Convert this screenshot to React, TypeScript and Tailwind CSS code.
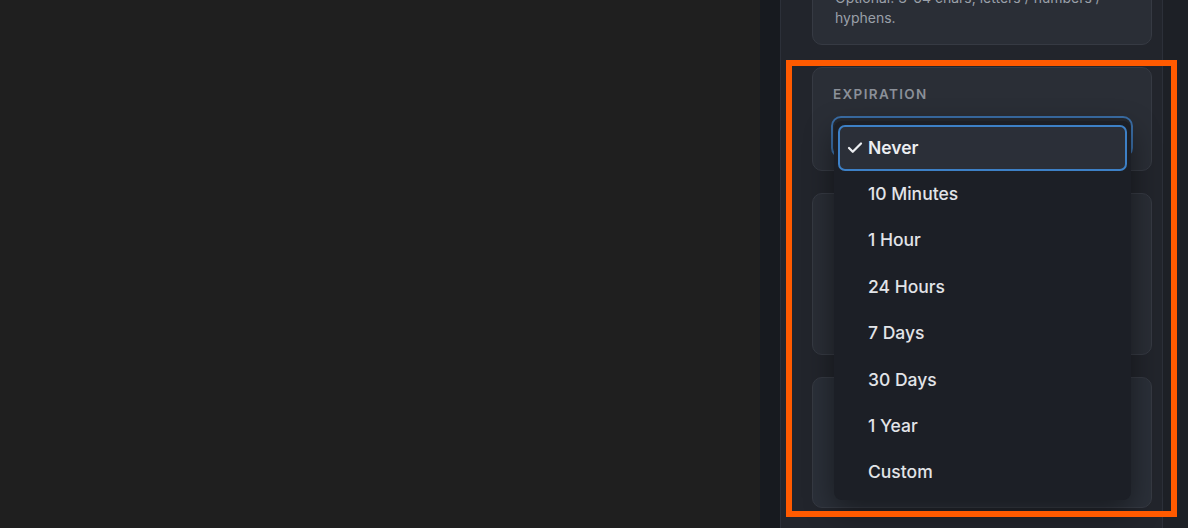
import { Check } from "lucide-react";

const options = ["Never", "10 Minutes", "1 Hour", "24 Hours", "7 Days", "30 Days", "1 Year", "Custom"];

export default function App() {
  const selected = "Never";
  return (
    <div
      className="relative flex h-[528px] w-[1188px] overflow-hidden bg-[#1f1f1f]"
      style={{ fontFamily: "Inter, 'Noto Sans', sans-serif" }}
    >
      <div className="flex-1 bg-[#1f1f1f]" />
      <div className="w-[20px] bg-[#171a1f]" />

      {/* side panel */}
      <aside className="flex w-[383px] flex-col gap-[22px] border-x border-[#2c3039] bg-[#22252c] pl-[31px] pr-[10px]">
        <div className="-mt-[29px] rounded-[10px] border border-[#363a43] bg-[#2a2e36] px-[22px] pt-[16px] pb-[16px]">
          <p className="text-[14px] leading-[20px] text-[#9aa0a9]">
            Optional: 3-64 chars, letters / numbers / hyphens.
          </p>
        </div>

        <div className="relative rounded-[10px] border border-[#363a43] bg-[#2a2e36] px-[18px] pt-[18px] pb-[12px]">
          <div className="pl-[2px] text-[13.5px] leading-[16px] font-semibold tracking-[0.1em] text-[#8b9099] uppercase">
            Expiration
          </div>
          <div className="mt-[14px] h-[42px] rounded-[10px] border-2 border-[#3b6fa8] bg-[#262a31]" />

          {/* open dropdown */}
          <div className="absolute top-[53px] left-[21px] z-10 w-[297px] rounded-[8px] bg-[#1c1f26] p-1 shadow-[0_10px_30px_rgba(0,0,0,0.45)]">
            {options.map((o) =>
              o === selected ? (
                <div
                  key={o}
                  className="flex h-[46px] items-center gap-[4px] rounded-[7px] border-2 border-[#3d80c6] bg-[#2b2f38] pl-[6px] text-[17.5px] font-semibold text-[#eceef1]"
                >
                  <Check size={18} strokeWidth={3} className="text-[#eceef1]" />
                  {o}
                </div>
              ) : (
                <div
                  key={o}
                  className="flex h-[46.4px] items-center pl-[30px] text-[17.5px] font-medium text-[#e2e4e8]"
                >
                  {o}
                </div>
              ),
            )}
          </div>
        </div>

        <div className="h-[162px] shrink-0 rounded-[10px] border border-[#363a43] bg-[#2a2e36]" />
        <div className="h-[131px] shrink-0 rounded-[10px] border border-[#363a43] bg-[#2b3039]" />
      </aside>

      <div className="w-[25px] bg-[#1d2026]" />

      {/* annotation frame */}
      <div className="pointer-events-none absolute top-[60px] left-[786px] z-20 h-[457px] w-[391px] border-[6px] border-[#ff5a00]" />
    </div>
  );
}
